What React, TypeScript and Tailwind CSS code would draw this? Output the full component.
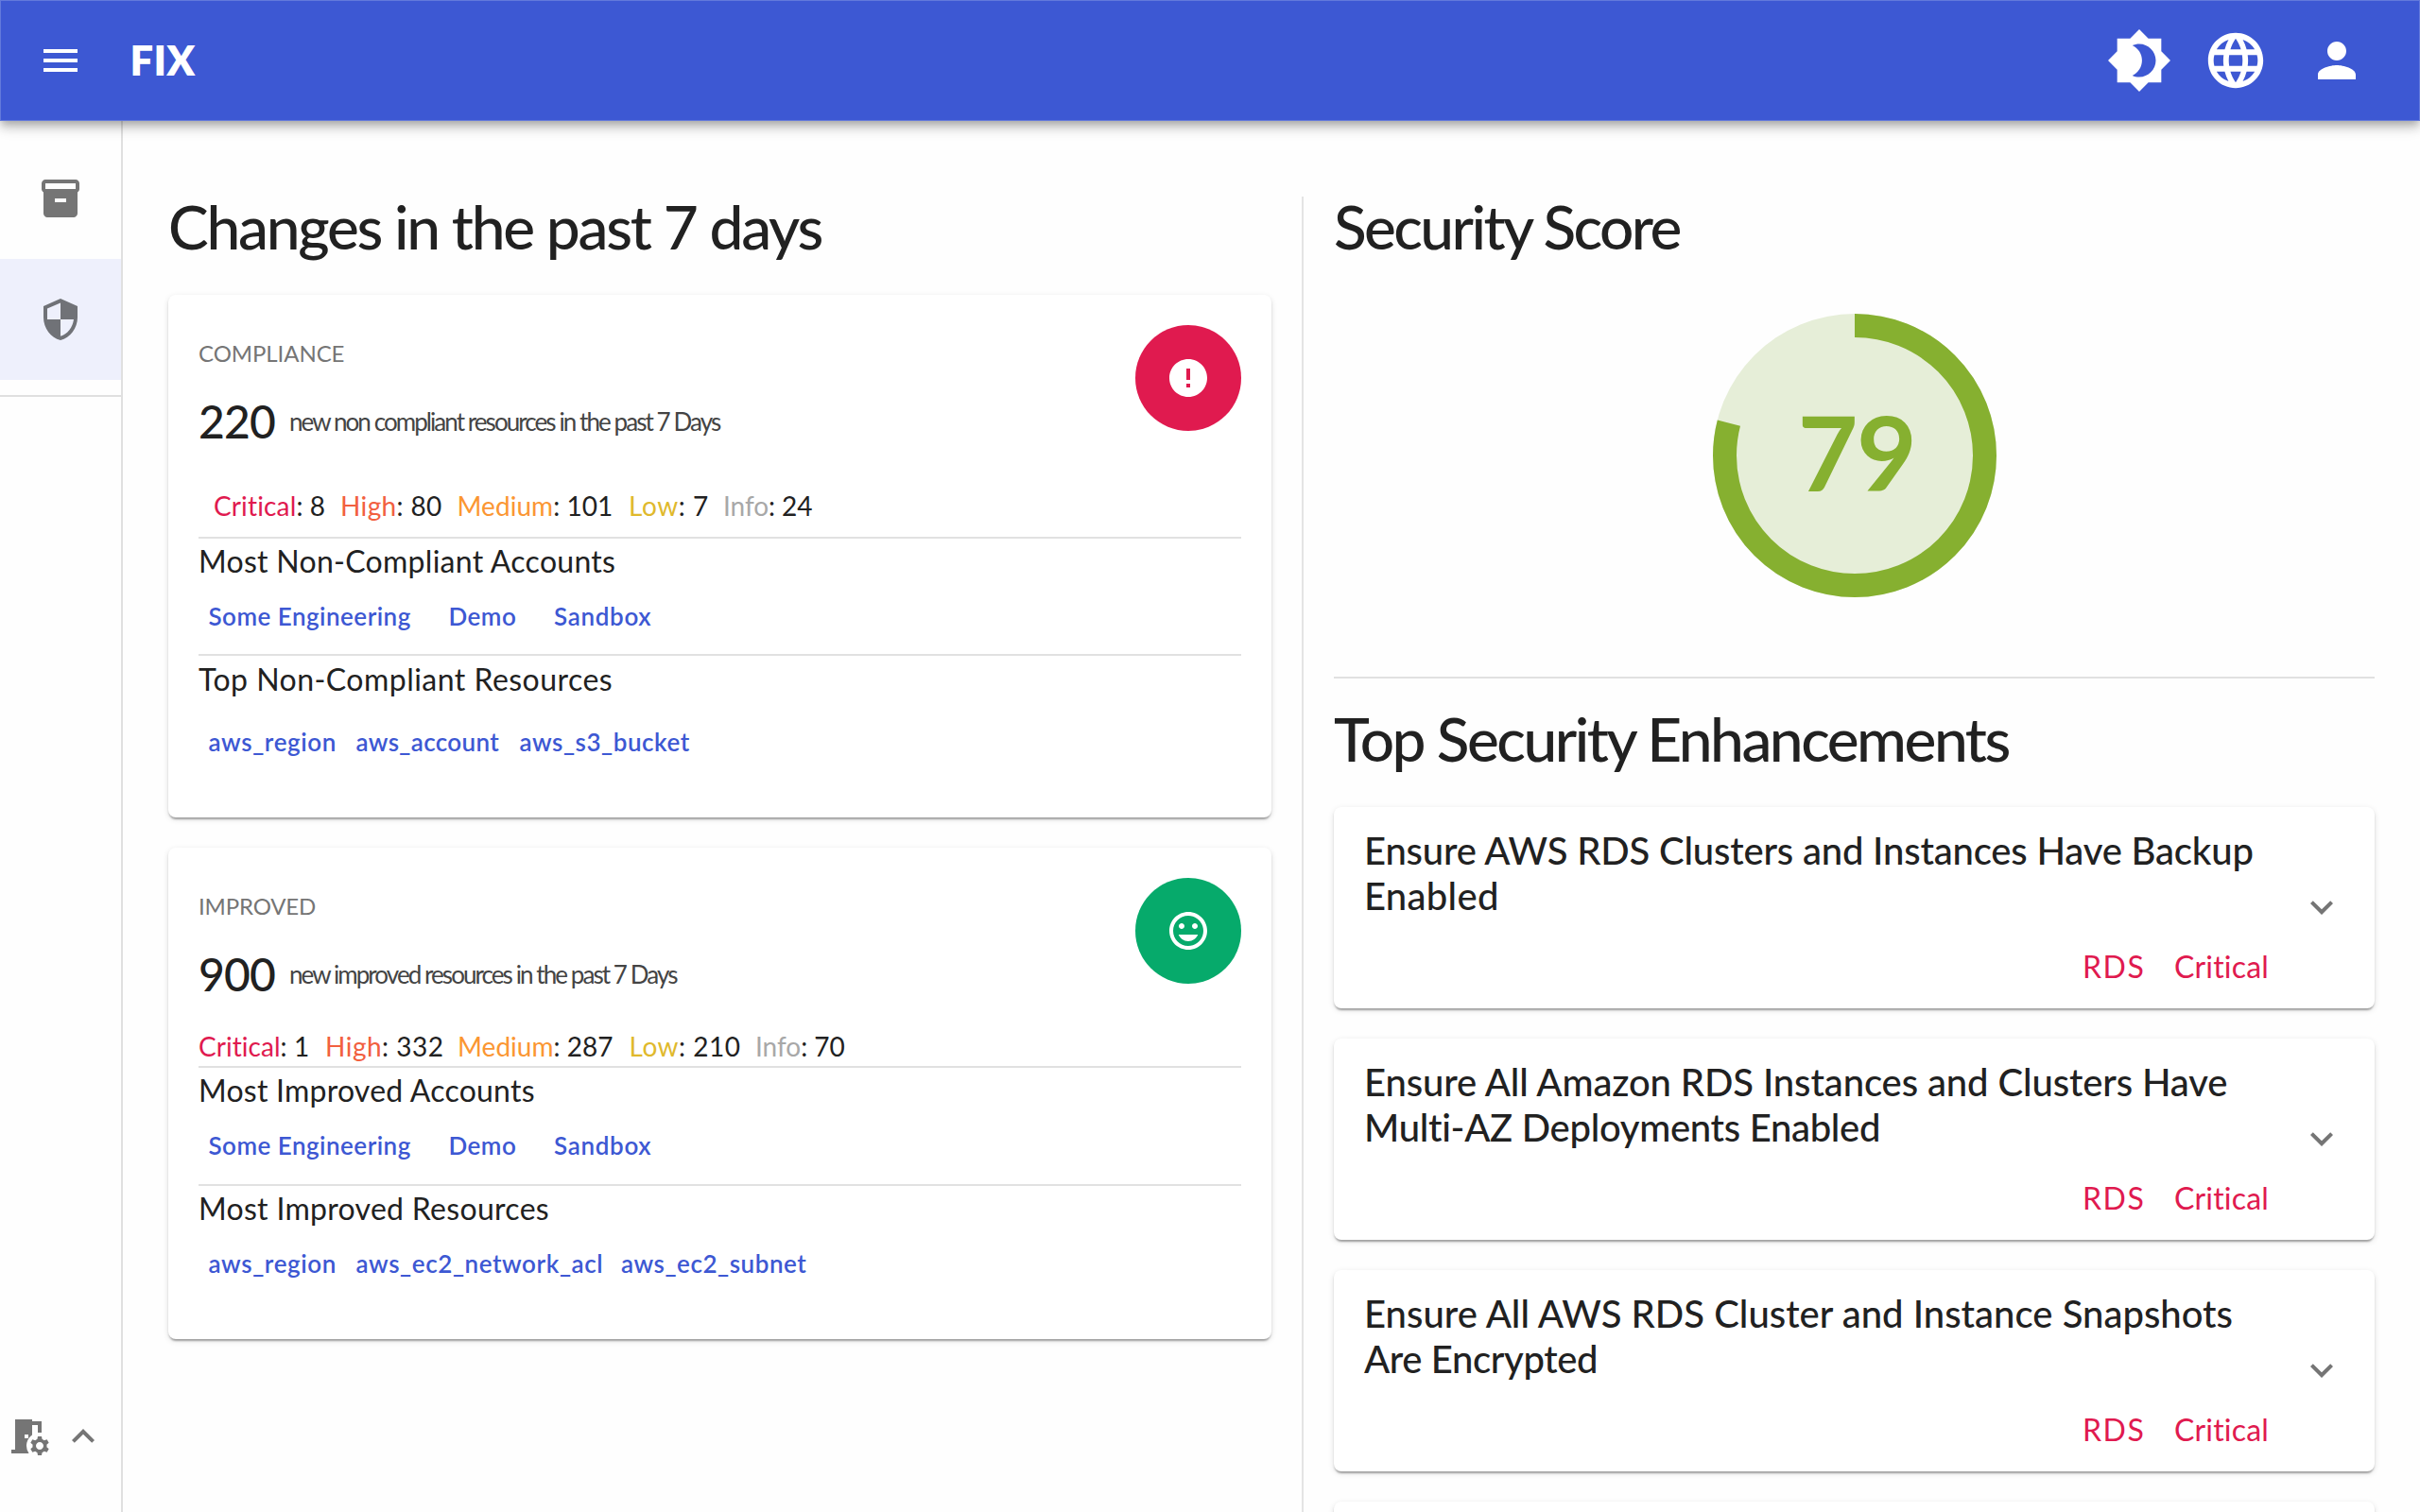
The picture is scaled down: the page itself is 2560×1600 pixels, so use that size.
import type { ReactNode } from "react";
import {
  MdBrightness4,
  MdError,
  MdExpandLess,
  MdExpandMore,
  MdInsertEmoticon,
  MdInventory2,
  MdLanguage,
  MdMenu,
  MdPerson,
  MdRoomPreferences,
  MdSecurity,
} from "react-icons/md";

const cardShadow =
  "rounded-[8px] bg-white shadow-[0_4px_2px_-2px_rgba(0,0,0,0.2),0_2px_2px_0_rgba(0,0,0,0.14),0_2px_6px_0_rgba(0,0,0,0.12)]";

type Item = { text: string; className: string };
type Severity = { label: string; value: number; color: string; className: string };

function Header() {
  return (
    <header className="relative z-10 flex h-[128px] shrink-0 items-center bg-[#3d58d3] pl-10 pr-[58px] text-white shadow-[inset_0_0_0_1px_rgba(255,255,255,0.2),0_4px_8px_-2px_rgba(0,0,0,0.2),0_8px_10px_0_rgba(0,0,0,0.14),0_2px_20px_0_rgba(0,0,0,0.12)]">
      <MdMenu className="size-12" />
      <span className="ml-[49.5px] pb-[2px] text-[43.5px] leading-[52px] font-extrabold tracking-[0.3px]">FIX</span>
      <div className="ml-auto flex items-center">
        <MdBrightness4 className="size-[70px]" />
        <MdLanguage className="ml-8 size-[70px]" />
        <MdPerson className="ml-[42px] size-[60px]" />
      </div>
    </header>
  );
}

function Sidebar() {
  return (
    <aside className="flex w-[130px] shrink-0 flex-col border-r-2 border-[#e0e0e0] text-[#757575]">
      <nav className="border-b-2 border-[#e0e0e0] pt-[18px] pb-4">
        <a className="flex h-32 items-center justify-center">
          <MdInventory2 className="size-12" />
        </a>
        <a className="flex h-32 items-center justify-center bg-[#eef0fc] text-[#707277]">
          <MdSecurity className="size-12" />
        </a>
      </nav>
      <div className="mt-auto mb-14 flex items-center gap-[10px] pl-[6px]">
        <MdRoomPreferences className="size-12" />
        <MdExpandLess className="size-12" />
      </div>
    </aside>
  );
}

function Rule({ className }: { className: string }) {
  return <hr className={"h-[2px] border-0 bg-[#e1e1e1] " + className} />;
}

function Links({ items, className }: { items: Item[]; className: string }) {
  return (
    <div
      className={
        "flex pl-[10.5px] text-[26px] leading-8 font-semibold whitespace-nowrap text-[#3d58d3] " + className
      }
    >
      {items.map((item) => (
        <a key={item.text} className={item.className}>
          {item.text}
        </a>
      ))}
    </div>
  );
}

function SummaryHead({
  title,
  titleClass,
  count,
  text,
  badge,
}: {
  title: string;
  titleClass: string;
  count: number;
  text: string;
  badge: ReactNode;
}) {
  return (
    <div className="flex h-[130px] justify-between">
      <div className="pt-4">
        <div className={"text-2xl leading-7 text-[#757575] " + titleClass}>{title}</div>
        <div className="mt-[29px] flex h-[58px] items-center">
          <span className="w-24 text-[48px] leading-[58px] font-medium tracking-[-0.9px]">{count}</span>
          <span className="text-[26px] leading-8 tracking-[-1.93px] text-[#444444]">{text}</span>
        </div>
      </div>
      {badge}
    </div>
  );
}

function Severities({ items, className }: { items: Severity[]; className: string }) {
  return (
    <div className={"flex text-[28px] leading-[34px] whitespace-nowrap " + className}>
      {items.map((s) => (
        <span key={s.label} className={s.className}>
          <span className={s.color}>{s.label}</span>: {s.value}
        </span>
      ))}
    </div>
  );
}

const accounts: Item[] = [
  { text: "Some Engineering", className: "w-[254px] tracking-[0.48px]" },
  { text: "Demo", className: "w-[111.5px] tracking-[0.47px]" },
  { text: "Sandbox", className: "tracking-[0.68px]" },
];

const RED = "text-[#e01a4f]";
const HIGH = "text-[#f2603f]";
const MEDIUM = "text-[#fb9632]";
const LOW = "text-[#e0b92c]";
const INFO = "text-[#a8a8a8]";

function ComplianceCard() {
  return (
    <section className={"mt-10 h-[553px] p-8 " + cardShadow}>
      <SummaryHead
        title="COMPLIANCE"
        titleClass="tracking-[-0.07px]"
        count={220}
        text="new non compliant resources in the past 7 Days"
        badge={
          <div className="flex size-28 items-center justify-center rounded-full bg-[#e01a4f] text-white">
            <MdError className="size-12" />
          </div>
        }
      />
      <Severities
        className="mt-11 pl-4"
        items={[
          { label: "Critical", value: 8, color: RED, className: "w-[134px] tracking-[0.15px]" },
          { label: "High", value: 80, color: HIGH, className: "w-[123.5px] tracking-[0.37px]" },
          { label: "Medium", value: 101, color: MEDIUM, className: "w-[181.5px] tracking-[0.04px]" },
          { label: "Low", value: 7, color: LOW, className: "w-[100px] tracking-[0.56px]" },
          { label: "Info", value: 24, color: INFO, className: "tracking-[-0.07px]" },
        ]}
      />
      <Rule className="mt-4" />
      <h3 className="mt-[5px] text-[32px] leading-[38px] tracking-[0.28px]">Most Non-Compliant Accounts</h3>
      <Links className="mt-[23px]" items={accounts} />
      <Rule className="mt-6" />
      <h3 className="mt-[6px] text-[32px] leading-[38px] tracking-[0.47px]">Top Non-Compliant Resources</h3>
      <Links
        className="mt-[31px]"
        items={[
          { text: "aws_region", className: "w-[156px] tracking-[0.62px]" },
          { text: "aws_account", className: "w-[173px] tracking-[0.34px]" },
          { text: "aws_s3_bucket", className: "tracking-[0.55px]" },
        ]}
      />
    </section>
  );
}

function ImprovedCard() {
  return (
    <section className={"mt-8 h-[520px] p-8 " + cardShadow}>
      <SummaryHead
        title="IMPROVED"
        titleClass="tracking-[-0.16px]"
        count={900}
        text="new improved resources in the past 7 Days"
        badge={
          <div className="flex size-28 items-center justify-center rounded-full bg-[#06aa6b] text-white">
            <MdInsertEmoticon className="size-12" />
          </div>
        }
      />
      <Severities
        className="mt-[31px]"
        items={[
          { label: "Critical", value: 1, color: RED, className: "w-[134px] tracking-[0.05px]" },
          { label: "High", value: 332, color: HIGH, className: "w-[140px] tracking-[0.5px]" },
          { label: "Medium", value: 287, color: MEDIUM, className: "w-[181.5px] tracking-[0.03px]" },
          { label: "Low", value: 210, color: LOW, className: "w-[133.5px] tracking-[0.52px]" },
          { label: "Info", value: 70, color: INFO, className: "tracking-[-0.02px]" },
        ]}
      />
      <Rule className="mt-1" />
      <h3 className="mt-[5px] text-[32px] leading-[38px] tracking-[0.23px]">Most Improved Accounts</h3>
      <Links className="mt-[23px]" items={accounts} />
      <Rule className="mt-[25px]" />
      <h3 className="mt-[5px] text-[32px] leading-[38px] tracking-[0.3px]">Most Improved Resources</h3>
      <Links
        className="mt-[23px]"
        items={[
          { text: "aws_region", className: "w-[156px] tracking-[0.62px]" },
          { text: "aws_ec2_network_acl", className: "w-[280.5px] tracking-[0.59px]" },
          { text: "aws_ec2_subnet", className: "tracking-[0.55px]" },
        ]}
      />
    </section>
  );
}

function ScoreRing({ score }: { score: number }) {
  const length = 2 * Math.PI * 137.5;
  return (
    <div className="relative mx-auto mt-[60px] flex size-[300px] items-center justify-center rounded-full bg-[#e6eed8]">
      <svg viewBox="0 0 300 300" className="absolute inset-0 size-full -rotate-90">
        <circle
          cx="150"
          cy="150"
          r="137.5"
          fill="none"
          stroke="#86b030"
          strokeWidth="25"
          strokeDasharray={`${(length * score) / 100} ${length}`}
        />
      </svg>
      <span className="relative pb-[11px] pl-[5px] text-[110px] leading-[132px] font-bold tracking-[-1.5px] text-[#86b030]">
        {score}
      </span>
    </div>
  );
}

const enhancements: Item[][] = [
  [
    { text: "Ensure AWS RDS Clusters and Instances Have Backup", className: "tracking-[-0.18px]" },
    { text: "Enabled", className: "tracking-[0.3px]" },
  ],
  [
    { text: "Ensure All Amazon RDS Instances and Clusters Have", className: "tracking-[-0.11px]" },
    { text: "Multi-AZ Deployments Enabled", className: "tracking-[-0.3px]" },
  ],
  [
    { text: "Ensure All AWS RDS Cluster and Instance Snapshots", className: "tracking-[0.02px]" },
    { text: "Are Encrypted", className: "tracking-[-0.38px]" },
  ],
];

function Enhancement({ lines }: { lines: Item[] }) {
  return (
    <article className={"flex h-[213px] shrink-0 items-center pr-8 pl-8 " + cardShadow}>
      <div className="h-full flex-1 pt-[22px]">
        <h3 className="text-[40px] leading-[48px] font-medium whitespace-nowrap">
          {lines.map((line) => (
            <span key={line.text} className={"block " + line.className}>
              {line.text}
            </span>
          ))}
        </h3>
        <div className="mt-8 flex justify-end pr-8 text-[32px] leading-[38px] text-[#e01a4f]">
          <span className="w-[97px] tracking-[1.5px]">RDS</span>
          <span className="w-[100px] tracking-[0.19px]">Critical</span>
        </div>
      </div>
      <MdExpandMore className="mb-[2px] size-12 text-[#757575]" />
    </article>
  );
}

export default function App() {
  return (
    <div className="flex h-[1600px] w-[2560px] flex-col overflow-hidden bg-[#fefefe] font-['Lato',sans-serif] text-[#212121]">
      <Header />
      <div className="flex min-h-0 flex-1">
        <Sidebar />
        <main className="flex min-w-0 flex-1 pt-20">
          <div className="w-[1249px] shrink-0 border-r-2 border-[#e4e4e4] pr-8 pl-12">
            <h2 className="text-[64px] leading-[64px] font-medium tracking-[-2.25px]">
              Changes in the past 7 days
            </h2>
            <ComplianceCard />
            <ImprovedCard />
          </div>
          <div className="min-w-0 flex-1 pr-12 pl-8">
            <h2 className="text-[64px] leading-[64px] font-medium tracking-[-2.6px]">Security Score</h2>
            <ScoreRing score={79} />
            <Rule className="mt-[84px]" />
            <h2 className="mt-8 text-[64px] leading-[64px] font-medium tracking-[-2.5px]">
              Top Security Enhancements
            </h2>
            <div className="mt-10 flex flex-col gap-8">
              {enhancements.map((lines) => (
                <Enhancement key={lines[0].text} lines={lines} />
              ))}
              <article className={"h-[213px] shrink-0 " + cardShadow} />
            </div>
          </div>
        </main>
      </div>
    </div>
  );
}
